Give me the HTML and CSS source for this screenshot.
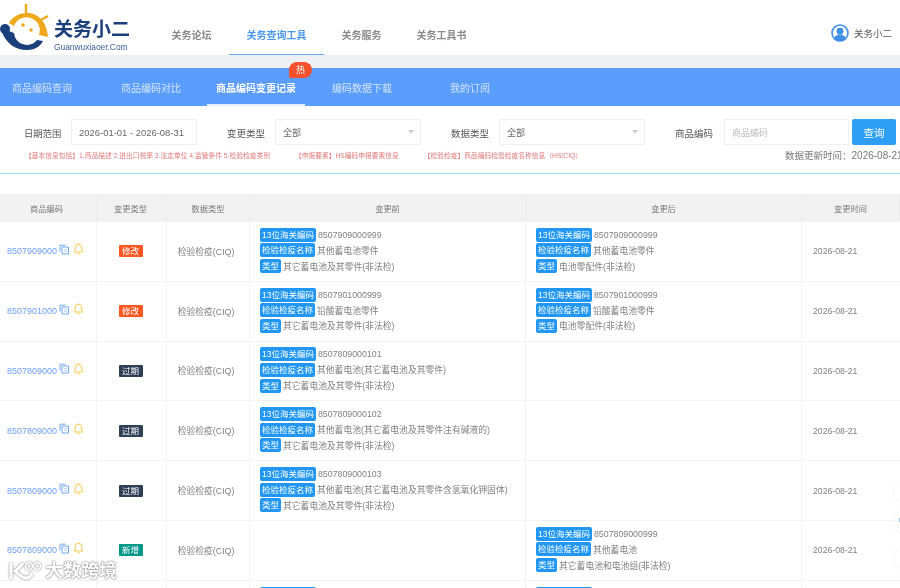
FILE: index.html
```html
<!DOCTYPE html>
<html lang="zh-CN">

<head>
    <meta charset="UTF-8">
    <meta name="viewport" content="width=device-width, initial-scale=1.0">
    <title>关务小二</title>
    <link rel="stylesheet" href="styles.css">
</head>

<body>
    <svg class="defs" width="0" height="0">
        <symbol id="copy" viewBox="0 0 11 11">
            <path d="M1 7.500V1.200h5.500M3 3h6.500v7H3z" fill="none" stroke="#6ea8ee" stroke-width="1"/>
            <path d="M5 5.500h3M5 7.500h3" stroke="#bcd6f5" stroke-width="1"/>
        </symbol>
        <symbol id="bell" viewBox="0 0 11 12">
            <path d="M1 9h9L8.800 7.400V4.600a3.300 3.300 0 0 0-6.600 0v2.800zM5.500 1.300V.4M4.200 10.300a1.400 1.400 0 0 0 2.600 0" fill="none" stroke="#f6c94f" stroke-width="1"/>
        </symbol>
    </svg>

    <header class="top">
        <div class="logo">
            <svg class="logo-mark" width="50" height="50" viewBox="0 0 50 50">
                <path d="M26 1v11M39 18l9-5" stroke="#eda81c" stroke-width="2.400" fill="none"/>
                <path d="M9 20C13 13 20 10 27 10C39 10 47 20 48 34L39 32A13 13 0 0 0 14 23Z" fill="#eda81c"/>
                <path d="M2 29C6 40 15 47 27 47C34 47 40 44 43 38L37 37A13 13 0 0 1 14 30L9 28Z" fill="#1b3f7a"/>
                <circle cx="5" cy="26" r="5" fill="#1b3f7a"/>
                <circle cx="23" cy="22" r="1.800" fill="#eda81c"/>
                <circle cx="31" cy="27" r="1.800" fill="#eda81c"/>
            </svg>
            <div class="logo-text">
                <div class="logo-name">关务小二</div>
                <div class="logo-url">Guanwuxiaoer.Com</div>
            </div>
        </div>
        <nav class="nav">
            <a class="nav-item">关务论坛</a>
            <a class="nav-item active">关务查询工具</a>
            <a class="nav-item">关务服务</a>
            <a class="nav-item">关务工具书</a>
        </nav>
        <div class="user">
            <svg width="18" height="18" viewBox="0 0 18 18">
                <circle cx="9" cy="9" r="8" fill="#fff" stroke="#3d8fe8" stroke-width="1.600"/>
                <circle cx="9" cy="7.200" r="3.400" fill="#3d8fe8"/>
                <path d="M3.200 14.600c1-3 3-4 5.800-4s4.800 1 5.800 4A8 8 0 0 1 3.200 14.600z" fill="#3d8fe8"/>
            </svg>
            <span>关务小二</span>
        </div>
    </header>

    <div class="tabs">
        <a class="tab">商品编码查询</a>
        <a class="tab">商品编码对比</a>
        <a class="tab active">商品编码变更记录<span class="hot">热</span></a>
        <a class="tab">编码数据下载</a>
        <a class="tab">我的订阅</a>
    </div>

    <section class="filter">
        <div class="filter-row">
            <label class="filter-label first">日期范围</label>
            <div class="control date">2026-01-01 - 2026-08-31</div>
            <label class="filter-label">变更类型</label>
            <div class="control select">全部</div>
            <label class="filter-label">数据类型</label>
            <div class="control select">全部</div>
            <label class="filter-label">商品编码</label>
            <div class="control code">商品编码</div>
            <button class="search">查询</button>
        </div>
        <div class="notes">
            <span class="note">【基本信息包括】1.商品描述 2.进出口税率 3.法定单位 4.监管条件 5.检验检疫类别</span>
            <span class="note">【申报要素】HS编码申报要素信息</span>
            <span class="note">【检验检疫】商品编码检验检疫名称信息（HS/CIQ）</span>
            <span class="updated">数据更新时间：<b>2026-08-21</b></span>
        </div>
    </section>

    <section class="table">
        <div class="row head">
            <div class="cell">商品编码</div>
            <div class="cell">变更类型</div>
            <div class="cell">数据类型</div>
            <div class="cell">变更前</div>
            <div class="cell">变更后</div>
            <div class="cell">变更时间</div>
        </div>

        <div class="row">
            <div class="cell code-cell"><a>8507909000</a><svg width="11" height="11"><use href="#copy"/></svg><svg width="11" height="12"><use href="#bell"/></svg></div>
            <div class="cell"><span class="badge edit">修改</span></div>
            <div class="cell">检验检疫(CIQ)</div>
            <div class="cell detail">
                <div class="kv"><span class="tag">13位海关编码</span>8507909000999</div>
                <div class="kv"><span class="tag">检验检疫名称</span>其他蓄电池零件</div>
                <div class="kv"><span class="tag">类型</span>其它蓄电池及其零件(非法检)</div>
            </div>
            <div class="cell detail">
                <div class="kv"><span class="tag">13位海关编码</span>8507909000999</div>
                <div class="kv"><span class="tag">检验检疫名称</span>其他蓄电池零件</div>
                <div class="kv"><span class="tag">类型</span>电池零配件(非法检)</div>
            </div>
            <div class="cell">2026-08-21</div>
        </div>

        <div class="row">
            <div class="cell code-cell"><a>8507901000</a><svg width="11" height="11"><use href="#copy"/></svg><svg width="11" height="12"><use href="#bell"/></svg></div>
            <div class="cell"><span class="badge edit">修改</span></div>
            <div class="cell">检验检疫(CIQ)</div>
            <div class="cell detail">
                <div class="kv"><span class="tag">13位海关编码</span>8507901000999</div>
                <div class="kv"><span class="tag">检验检疫名称</span>铅酸蓄电池零件</div>
                <div class="kv"><span class="tag">类型</span>其它蓄电池及其零件(非法检)</div>
            </div>
            <div class="cell detail">
                <div class="kv"><span class="tag">13位海关编码</span>8507901000999</div>
                <div class="kv"><span class="tag">检验检疫名称</span>铅酸蓄电池零件</div>
                <div class="kv"><span class="tag">类型</span>电池零配件(非法检)</div>
            </div>
            <div class="cell">2026-08-21</div>
        </div>

        <div class="row">
            <div class="cell code-cell"><a>8507809000</a><svg width="11" height="11"><use href="#copy"/></svg><svg width="11" height="12"><use href="#bell"/></svg></div>
            <div class="cell"><span class="badge expired">过期</span></div>
            <div class="cell">检验检疫(CIQ)</div>
            <div class="cell detail">
                <div class="kv"><span class="tag">13位海关编码</span>8507809000101</div>
                <div class="kv"><span class="tag">检验检疫名称</span>其他蓄电池(其它蓄电池及其零件)</div>
                <div class="kv"><span class="tag">类型</span>其它蓄电池及其零件(非法检)</div>
            </div>
            <div class="cell detail"></div>
            <div class="cell">2026-08-21</div>
        </div>

        <div class="row">
            <div class="cell code-cell"><a>8507809000</a><svg width="11" height="11"><use href="#copy"/></svg><svg width="11" height="12"><use href="#bell"/></svg></div>
            <div class="cell"><span class="badge expired">过期</span></div>
            <div class="cell">检验检疫(CIQ)</div>
            <div class="cell detail">
                <div class="kv"><span class="tag">13位海关编码</span>8507809000102</div>
                <div class="kv"><span class="tag">检验检疫名称</span>其他蓄电池(其它蓄电池及其零件注有碱液的)</div>
                <div class="kv"><span class="tag">类型</span>其它蓄电池及其零件(非法检)</div>
            </div>
            <div class="cell detail"></div>
            <div class="cell">2026-08-21</div>
        </div>

        <div class="row">
            <div class="cell code-cell"><a>8507809000</a><svg width="11" height="11"><use href="#copy"/></svg><svg width="11" height="12"><use href="#bell"/></svg></div>
            <div class="cell"><span class="badge expired">过期</span></div>
            <div class="cell">检验检疫(CIQ)</div>
            <div class="cell detail">
                <div class="kv"><span class="tag">13位海关编码</span>8507809000103</div>
                <div class="kv"><span class="tag">检验检疫名称</span>其他蓄电池(其它蓄电池及其零件含氢氧化钾固体)</div>
                <div class="kv"><span class="tag">类型</span>其它蓄电池及其零件(非法检)</div>
            </div>
            <div class="cell detail"></div>
            <div class="cell">2026-08-21</div>
        </div>

        <div class="row">
            <div class="cell code-cell"><a>8507809000</a><svg width="11" height="11"><use href="#copy"/></svg><svg width="11" height="12"><use href="#bell"/></svg></div>
            <div class="cell"><span class="badge added">新增</span></div>
            <div class="cell">检验检疫(CIQ)</div>
            <div class="cell detail"></div>
            <div class="cell detail">
                <div class="kv"><span class="tag">13位海关编码</span>8507809000999</div>
                <div class="kv"><span class="tag">检验检疫名称</span>其他蓄电池</div>
                <div class="kv"><span class="tag">类型</span>其它蓄电池和电池组(非法检)</div>
            </div>
            <div class="cell">2026-08-21</div>
        </div>

        <div class="row">
            <div class="cell"></div>
            <div class="cell"></div>
            <div class="cell"></div>
            <div class="cell detail top-aligned">
                <div class="kv"><span class="tag">13位海关编码</span>8507809000999</div>
            </div>
            <div class="cell detail top-aligned">
                <div class="kv"><span class="tag">13位海关编码</span>8507809000999</div>
            </div>
            <div class="cell"></div>
        </div>
    </section>

    <!-- 右侧悬浮按钮 -->
    <div class="float-btn one"></div>
    <div class="float-btn two"></div>
    <div class="float-btn three"></div>

    <div class="watermark">
        <svg width="34" height="22" viewBox="0 0 34 22">
            <path d="M3 3v16M15 3C11 8 9 10 7 11c3 2 6 7 11 7 3 0 5-2 6-5" fill="none" stroke="#fff" stroke-width="3"/>
            <circle cx="21" cy="6" r="3.500" fill="none" stroke="#fff" stroke-width="1.500"/>
            <circle cx="29" cy="6" r="3.500" fill="none" stroke="#fff" stroke-width="1.500"/>
        </svg>
        <span>大数跨境</span>
    </div>
</body>

</html>
```
FILE: styles.css
```css
html,
body {
    margin: 0;
    padding: 0;
}

body {
    position: relative;
    width: 900px;
    height: 588px;
    overflow: hidden;
    background: #fff;
    color: #808080;
    font-family: "Liberation Sans", "Noto Sans CJK SC", sans-serif;
    font-size: 9px;
    filter: blur(.4px);
}

.defs {
    position: absolute;
}

/* 顶部导航 */
.top {
    display: flex;
    height: 55px;
    background: #fff;
}

.logo {
    display: flex;
    width: 154px;
    padding-top: 3px;
    box-sizing: border-box;
}

.logo-mark {
    flex: none;
}

.logo-text {
    margin-left: 4px;
    padding-top: 15px;
    color: #1b3f7a;
}

.logo-name {
    font-size: 19px;
    line-height: 23px;
    font-weight: 700;
    white-space: nowrap;
}

.logo-url {
    margin-top: 1px;
    font-size: 8.400px;
    line-height: 10px;
    color: #3a6096;
    white-space: nowrap;
}

.nav {
    display: flex;
    height: 55px;
}

.nav-item {
    padding: 0 17.500px;
    line-height: 72px;
    font-size: 10px;
    font-weight: 700;
    color: #8a8a8a;
    white-space: nowrap;
}

.nav-item.active {
    height: 54px;
    color: #4a97f0;
    border-bottom: 1px solid #6aaaf2;
}

.user {
    display: flex;
    align-items: center;
    gap: 5px;
    height: 66px;
    margin-left: auto;
    padding-right: 8px;
    font-size: 9.500px;
    color: #555;
}

/* 蓝色标签栏 */
.tabs {
    display: grid;
    grid-template-columns: 109px 95px 116px 118px auto;
    height: 38px;
    margin-top: 13px;
    padding-left: 12px;
    background: #5b9dff;
    box-shadow: 0 -13px 0 #eeeff2;
}

.tab {
    position: relative;
    height: 38px;
    line-height: 41px;
    font-size: 10px;
    color: #d3e4fb;
    white-space: nowrap;
}

.tab.active {
    color: #fff;
    font-weight: 700;
}

.tab.active::after {
    content: "";
    position: absolute;
    left: -9px;
    bottom: 0;
    width: 98px;
    height: 2px;
    background: #e6f0fc;
}

.hot {
    position: absolute;
    left: 73px;
    top: -6px;
    width: 23px;
    height: 16px;
    border-radius: 8px 8px 8px 2px;
    background: #f4512c;
    color: #fff;
    font-size: 9px;
    font-weight: 400;
    line-height: 16px;
    text-align: center;
}

/* 筛选区 */
.filter {
    height: 67px;
    border-bottom: 1px solid #a8dcf5;
}

.filter-row {
    display: flex;
    align-items: center;
    padding: 13px 0 0 24px;
}

.filter-label {
    width: 38px;
    flex: none;
    padding-top: 1px;
    font-size: 9.500px;
    color: #555;
    white-space: nowrap;
}

.filter-label.first {
    width: 37px;
    font-size: 9.300px;
}

.control {
    height: 26px;
    margin: 0 30px 0 10px;
    padding-left: 7px;
    box-sizing: border-box;
    border: 1px solid #f0f0f0;
    line-height: 26px;
    color: #666;
}

.date {
    width: 126px;
    font-size: 9.450px;
}

.select {
    position: relative;
    width: 146px;
}

.select::after {
    content: "";
    position: absolute;
    right: 6px;
    top: 10px;
    border: 3.500px solid transparent;
    border-top: 4px solid #ccc;
}

.code {
    width: 125px;
    margin: 0 3px 0 11px;
    color: #bbb;
}

.search {
    width: 44px;
    height: 26px;
    padding: 0;
    border: 0;
    border-radius: 2px;
    background: #2f9ef5;
    color: #fff;
    font-family: inherit;
    font-size: 10.500px;
}

.notes {
    display: flex;
    align-items: center;
    position: relative;
    height: 20px;
    padding-left: 25px;
    gap: 25px;
}

.note {
    font-size: 6.750px;
    color: #e27a7a;
    white-space: nowrap;
}

.updated {
    position: absolute;
    left: 785px;
    top: 4px;
    font-size: 9.500px;
    line-height: 14px;
    color: #777;
    white-space: nowrap;
}

.updated b {
    font-size: 10px;
    font-weight: 400;
}

/* 表格 */
.table {
    margin-top: 20px;
}

.row {
    display: grid;
    grid-template-columns: 97px 70px 83px 276px 276px 98px;
    height: 59.800px;
    box-sizing: border-box;
    border-top: 1px solid #f3f3f3;
}

.head {
    height: 27px;
    background: #f2f2f2;
    color: #777;
    font-size: 8.200px;
    border-top: 0;
}

.cell {
    display: flex;
    align-items: center;
    justify-content: center;
    border-right: 1px solid #f3f3f3;
    white-space: nowrap;
}

.head .cell {
    border-right-color: #ececec;
}

.cell:nth-child(1) {
    padding-right: 3px;
}

.cell:nth-child(2) {
    padding-right: 2px;
}

.cell:nth-child(3) {
    padding-right: 4px;
    font-size: 8.800px;
}

.head .cell:nth-child(3) {
    padding-right: 0;
    font-size: 8.200px;
}

.row:not(.head) .cell:last-child {
    justify-content: flex-start;
    padding-left: 11px;
    border-right: 0;
    font-size: 8.700px;
}

.code-cell {
    justify-content: flex-start;
    padding-left: 7px;
}

.code-cell a {
    color: #6ea0f5;
}

.code-cell svg {
    margin: -4px 0 0 2px;
}

.code-cell svg:last-child {
    margin-left: 3px;
}

.badge {
    width: 24px;
    height: 12px;
    border-radius: 1px;
    color: #fff;
    font-size: 8.500px;
    line-height: 12px;
    text-align: center;
}

.edit {
    background: #ff5722;
}

.expired {
    background: #2f4056;
}

.added {
    background: #009688;
}

.detail {
    flex-direction: column;
    align-items: flex-start;
    padding: 0 0 2px 10px;
    gap: 1.700px;
}

.top-aligned {
    justify-content: flex-start;
    padding-top: 6px;
}

.kv {
    display: flex;
    align-items: center;
    height: 14px;
    font-size: 8.800px;
}

.tag {
    height: 14px;
    margin-right: 2px;
    padding: 0 2px;
    border-radius: 2px;
    background: #2196f3;
    color: #fff;
    font-size: 8.500px;
    line-height: 14px;
}

/* 悬浮层 */
.float-btn {
    position: absolute;
    left: 893px;
    width: 26px;
    height: 26px;
    border: 1px solid #f4f4f4;
    border-radius: 50%;
    background: #fff;
}

.one {
    top: 478px;
}

.two {
    top: 508px;
}

.two::before {
    content: "";
    position: absolute;
    left: 5px;
    top: 9px;
    width: 1px;
    height: 4px;
    background: #8fc0f5;
}

.three {
    top: 543px;
}

.watermark {
    position: absolute;
    left: 8px;
    top: 560px;
    display: flex;
    align-items: center;
    gap: 3px;
    color: #fff;
    font-size: 18px;
    font-weight: 700;
    line-height: 22px;
    text-shadow: 0 0 2px #777, 0 0 1px #777;
}

.watermark svg {
    filter: drop-shadow(0 0 1px #777);
}
```
